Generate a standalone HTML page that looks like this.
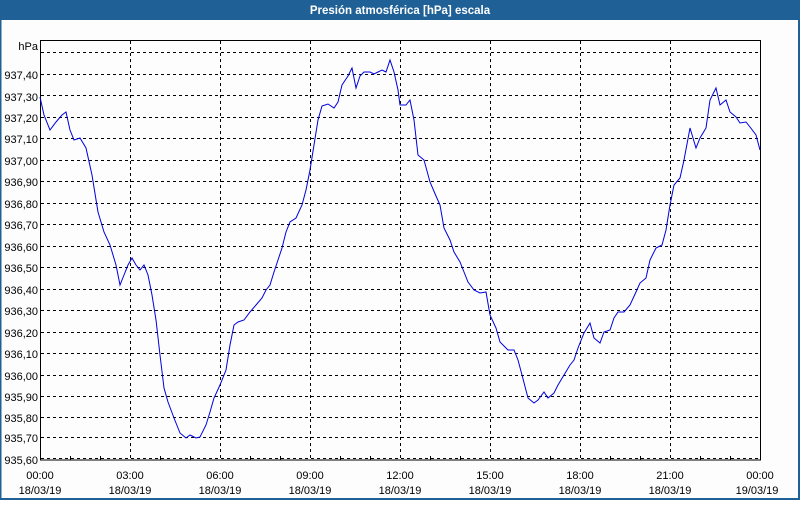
<!DOCTYPE html>
<html><head><meta charset="utf-8"><style>
html,body{margin:0;padding:0;background:#fff;}
body{width:800px;height:500px;overflow:hidden;font-family:"Liberation Sans",Tahoma,sans-serif;}
</style></head><body>
<svg width="800" height="500" xmlns="http://www.w3.org/2000/svg" font-family="Liberation Sans, sans-serif" font-size="11">
<rect x="0" y="0" width="800" height="500" fill="#fcfdfc"/>
<rect x="0" y="0" width="800" height="20" fill="#1f6096"/>
<rect x="0" y="0" width="1.5" height="500" fill="#1f6096"/>
<rect x="798" y="0" width="2" height="500" fill="#1f6096"/>
<rect x="0" y="498" width="800" height="2" fill="#1f6096"/>
<text x="400" y="14" fill="#fff" font-weight="bold" text-anchor="middle" font-size="11.5">Presión atmosférica [hPa] escala</text>
<g stroke="#000" stroke-width="1" stroke-dasharray="3,3" fill="none">
<line x1="130.5" y1="41" x2="130.5" y2="460"/>
<line x1="220.5" y1="41" x2="220.5" y2="460"/>
<line x1="310.5" y1="41" x2="310.5" y2="460"/>
<line x1="400.5" y1="41" x2="400.5" y2="460"/>
<line x1="490.5" y1="41" x2="490.5" y2="460"/>
<line x1="580.5" y1="41" x2="580.5" y2="460"/>
<line x1="670.5" y1="41" x2="670.5" y2="460"/>
<line x1="41" y1="52.5" x2="760" y2="52.5"/>
<line x1="41" y1="74.5" x2="760" y2="74.5"/>
<line x1="41" y1="95.5" x2="760" y2="95.5"/>
<line x1="41" y1="117.5" x2="760" y2="117.5"/>
<line x1="41" y1="138.5" x2="760" y2="138.5"/>
<line x1="41" y1="160.5" x2="760" y2="160.5"/>
<line x1="41" y1="181.5" x2="760" y2="181.5"/>
<line x1="41" y1="203.5" x2="760" y2="203.5"/>
<line x1="41" y1="224.5" x2="760" y2="224.5"/>
<line x1="41" y1="246.5" x2="760" y2="246.5"/>
<line x1="41" y1="267.5" x2="760" y2="267.5"/>
<line x1="41" y1="289.5" x2="760" y2="289.5"/>
<line x1="41" y1="310.5" x2="760" y2="310.5"/>
<line x1="41" y1="332.5" x2="760" y2="332.5"/>
<line x1="41" y1="353.5" x2="760" y2="353.5"/>
<line x1="41" y1="375.5" x2="760" y2="375.5"/>
<line x1="41" y1="396.5" x2="760" y2="396.5"/>
<line x1="41" y1="417.5" x2="760" y2="417.5"/>
<line x1="41" y1="437.5" x2="760" y2="437.5"/>
<line x1="41" y1="458.5" x2="760" y2="458.5"/>
</g>
<rect x="40.5" y="40.5" width="720" height="419.5" fill="none" stroke="#000" stroke-width="1"/>
<g stroke="#000" stroke-width="1">
<line x1="70.5" y1="456" x2="70.5" y2="460"/><line x1="100.5" y1="456" x2="100.5" y2="460"/>
<line x1="160.5" y1="456" x2="160.5" y2="460"/><line x1="190.5" y1="456" x2="190.5" y2="460"/>
<line x1="250.5" y1="456" x2="250.5" y2="460"/><line x1="280.5" y1="456" x2="280.5" y2="460"/>
<line x1="340.5" y1="456" x2="340.5" y2="460"/><line x1="370.5" y1="456" x2="370.5" y2="460"/>
<line x1="430.5" y1="456" x2="430.5" y2="460"/><line x1="460.5" y1="456" x2="460.5" y2="460"/>
<line x1="520.5" y1="456" x2="520.5" y2="460"/><line x1="550.5" y1="456" x2="550.5" y2="460"/>
<line x1="610.5" y1="456" x2="610.5" y2="460"/><line x1="640.5" y1="456" x2="640.5" y2="460"/>
<line x1="700.5" y1="456" x2="700.5" y2="460"/><line x1="730.5" y1="456" x2="730.5" y2="460"/>
</g>
<g fill="#000" text-anchor="end">
<text x="38" y="50">hPa</text>
<text x="38" y="79">937,40</text>
<text x="38" y="101">937,30</text>
<text x="38" y="122">937,20</text>
<text x="38" y="143">937,10</text>
<text x="38" y="165">937,00</text>
<text x="38" y="186">936,90</text>
<text x="38" y="208">936,80</text>
<text x="38" y="229">936,70</text>
<text x="38" y="251">936,60</text>
<text x="38" y="272">936,50</text>
<text x="38" y="294">936,40</text>
<text x="38" y="315">936,30</text>
<text x="38" y="337">936,20</text>
<text x="38" y="358">936,10</text>
<text x="38" y="380">936,00</text>
<text x="38" y="401">935,90</text>
<text x="38" y="422">935,80</text>
<text x="38" y="442">935,70</text>
<text x="38" y="464">935,60</text>
</g>
<g fill="#000" text-anchor="middle">
<text x="40" y="479">00:00</text><text x="40" y="494">18/03/19</text>
<text x="130" y="479">03:00</text><text x="130" y="494">18/03/19</text>
<text x="220" y="479">06:00</text><text x="220" y="494">18/03/19</text>
<text x="310" y="479">09:00</text><text x="310" y="494">18/03/19</text>
<text x="400" y="479">12:00</text><text x="400" y="494">18/03/19</text>
<text x="490" y="479">15:00</text><text x="490" y="494">18/03/19</text>
<text x="580" y="479">18:00</text><text x="580" y="494">18/03/19</text>
<text x="670" y="479">21:00</text><text x="670" y="494">18/03/19</text>
<text x="760" y="479">00:00</text><text x="757" y="494">19/03/19</text>
</g>
<polyline fill="none" stroke="#0000e0" stroke-width="1" points="40,97 44,115 50,130 56,122 62,115 66,112 70,130 74,140 80,138 86,148 92,175 98,212 104,232 110,245 116,265 120,285 124,275 128,265 132,258 136,265 140,270 144,265 148,275 152,295 156,320 160,355 164,388 168,402 174,418 180,433 186,438 190,435 196,438 200,437 206,425 210,412 214,398 220,385 226,370 230,345 234,325 238,322 244,320 250,312 256,305 262,298 266,290 270,285 274,272 278,260 282,248 286,232 290,222 296,218 302,205 306,190 310,170 314,145 318,120 322,106 328,104 334,108 338,102 342,85 348,76 352,68 356,88 360,76 364,72 370,72 374,74 378,72 382,70 386,72 390,60 394,72 398,90 400,105 406,105 410,100 414,120 418,155 424,160 430,182 436,196 440,205 444,228 450,240 454,252 460,262 464,272 468,282 474,290 480,293 486,292 490,315 496,328 500,342 508,350 514,350 518,360 522,375 528,398 534,403 538,400 544,392 548,398 554,393 558,385 564,375 570,365 574,360 578,348 584,333 590,323 594,338 600,343 604,332 610,330 614,318 618,312 624,312 630,305 636,292 640,283 646,278 650,260 656,248 662,245 666,230 670,205 674,185 680,178 684,160 690,128 696,148 700,138 706,128 710,100 716,88 720,105 726,100 730,112 736,117 740,123 746,122 750,127 756,135 760,150"/>
</svg>
</body></html>
